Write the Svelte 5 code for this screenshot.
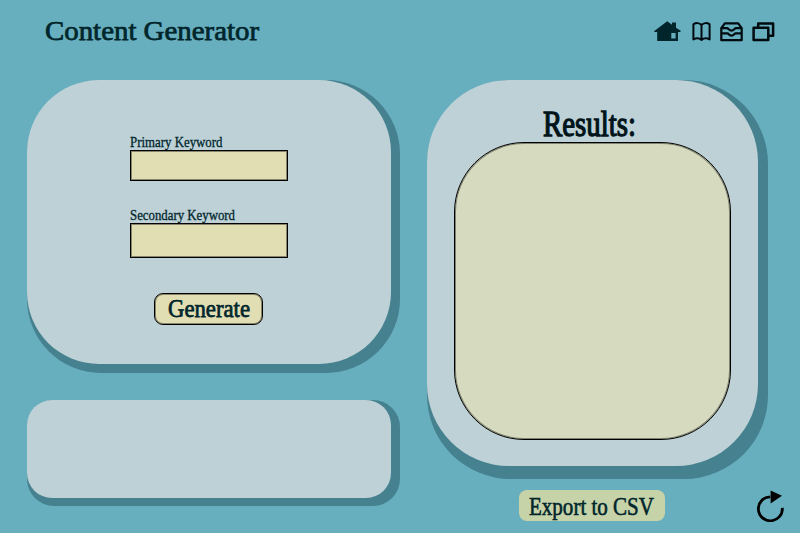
<script>
  let primary = $state('');
  let secondary = $state('');
</script>

{#snippet lettering(text, width, height, baseline, size, stroke)}
  <svg class="lettering" {width} {height} overflow="visible">
    <text x="0" y={baseline} font-size={size} stroke-width={stroke} textLength={width} lengthAdjust="spacingAndGlyphs">{text}</text>
  </svg>
{/snippet}

<div class="app">
  <header>
    <div class="title">{@render lettering('Content Generator', 214, 30, 23, 28, 0.75)}</div>
    <nav>
      <svg width="27" height="21" viewBox="0 0 27 21" fill="#00262c">
        <path fill-rule="evenodd" d="M0 10.2 L13.2 0.2 L18 3.8 V1.4 H22 V6.8 L27 10 L26 11 H24 V20 H3.2 V11 H0.6 Z M17.3 12 V17.5 H21.6 V12 Z" />
      </svg>
      <svg width="19" height="20" viewBox="0 0 19 20" fill="none" stroke="#000b10" stroke-width="2" stroke-linejoin="round">
        <path d="M9.5 3 C7.5 .6 3.8 .6 1.4 2.4 V17.4 C4 16 7.4 16 9.5 18 C11.6 16 15 16 17.6 17.4 V2.4 C15.2 .6 11.5 .6 9.5 3 V18" />
      </svg>
      <svg width="23" height="20" viewBox="0 0 23 20" fill="none" stroke="#000b10" stroke-width="2.2" stroke-linejoin="round">
        <path d="M1.3 6.2 L4.8 1.4 H18.2 L21.7 6.2 V18.2 H1.3 Z M1.3 6.2 H7 C8.6 6.2 9 8.6 11.5 8.6 C14 8.6 14.4 6.2 16 6.2 H21.7 M1.3 11.4 H7.4 C8.8 11.4 8.8 13.7 11.5 13.7 C14.2 13.7 14.2 11.4 15.6 11.4 H21.7" />
      </svg>
      <svg width="23" height="20" viewBox="0 0 23 20" fill="none" stroke="#000b10" stroke-width="2.5" stroke-linejoin="round">
        <path d="M1.6 5.8 H16.3 V18 H1.6 Z M6.2 5.5 V1.6 H21.1 V13.8 H17" />
      </svg>
    </nav>
  </header>

  <main>
    <div class="column">
      <div class="shade form-shade">
        <section class="card form-card">
          <label>
            {@render lettering('Primary Keyword', 92.5, 14, 11, 15, 0.3)}
            <input class="first" bind:value={primary} />
          </label>
          <label class="second-label">
            {@render lettering('Secondary Keyword', 105, 14, 11, 15, 0.3)}
            <input class="second" bind:value={secondary} />
          </label>
          <button class="generate">{@render lettering('Generate', 82, 28, 21.5, 25, 0.75)}</button>
        </section>
      </div>
      <div class="shade note-shade"><section class="card note-card"></section></div>
    </div>

    <div class="column right">
      <div class="shade results-shade">
        <section class="card results-card">
          <h2>{@render lettering('Results:', 93, 36, 29.7, 35.5, 1.3)}</h2>
          <div class="output"></div>
        </section>
      </div>
      <footer>
        <button class="export">{@render lettering('Export to CSV', 125, 30, 23.5, 25.5, 0.6)}</button>
        <button class="reload" aria-label="Reload">
          <svg width="27" height="32" viewBox="0 0 27 32">
            <path d="M25.3 17.8 A12 12 0 1 1 13.3 6.8" fill="none" stroke="#000" stroke-width="2.8" />
            <path d="M13.6 0.5 L25 5.7 L13.6 13.5 Z" />
          </svg>
        </button>
      </footer>
    </div>
  </main>
</div>

<style>
  :global(body) { background: #67aebe; }
  .app {
    width: 800px;
    height: 533px;
    overflow: hidden;
    background: #67aebe;
    font-family: "Palatino Linotype", Palatino, "Liberation Serif", serif;
  }
  svg { display: block; flex: none; }
  .lettering text { fill: #00262c; stroke: #00262c; }
  header {
    box-sizing: border-box;
    height: 80px;
    padding: 17px 25px 0 45px;
    display: flex;
    justify-content: space-between;
  }
  nav { display: flex; padding-top: 4px; }
  nav svg:nth-child(2) { margin: 1px 0 0 11px; }
  nav svg:nth-child(3) { margin: 1px 0 0 9px; }
  nav svg:nth-child(4) { margin: 1px 0 0 9px; }
  main { display: flex; gap: 27px; padding-left: 27px; }
  .shade { background: #45818e; }
  .card { box-sizing: border-box; background: #bdd1d7; }
  .form-shade { width: 373px; height: 293px; border-radius: 74px; }
  .form-card {
    width: 364px;
    height: 284px;
    border-radius: 72px;
    padding: 56px 0 0 103px;
    display: flex;
    flex-direction: column;
    align-items: flex-start;
  }
  label { display: block; }
  .second-label { margin-top: 28px; }
  input, button {
    display: block;
    box-sizing: border-box;
    margin: 0;
    border: 0;
    font: inherit;
  }
  input {
    width: 158px;
    padding: 0 8px;
    border: 1px solid #000;
    outline: 0;
    border-radius: 0;
    background: #e2deb3;
  }
  input, .generate, .output { box-shadow: inset 0 0 0 1px rgba(0, 0, 0, 0.4); }
  .first { height: 31px; }
  .second { height: 35px; }
  .generate {
    width: 109px;
    height: 32px;
    margin: 35px 0 0 24px;
    padding: 0 0 0 13px;
    border: 1px solid #000;
    border-radius: 9px;
    background: #e2deb3;
  }
  .note-shade { width: 373px; height: 106px; margin-top: 27px; border-radius: 27px; }
  .note-card { width: 364px; height: 98px; border-radius: 25px; }
  .results-shade { width: 341px; height: 399px; border-radius: 84px; }
  .results-card {
    width: 331px;
    height: 386px;
    border-radius: 82px;
    padding: 26px 0 0 27px;
  }
  h2 { margin: 0 0 0 89px; font-weight: 400; }
  h2 .lettering text { fill: #00141a; stroke: #00141a; }
  .output {
    box-sizing: border-box;
    width: 277px;
    height: 298px;
    border: 1px solid #000;
    border-radius: 70px;
    background: #d6dabe;
  }
  footer { display: flex; padding-left: 92px; }
  .export {
    width: 146px;
    height: 31px;
    margin-top: 11px;
    padding: 0 0 0 10px;
    border-radius: 8px;
    background: #c6d3a9;
  }
  .reload { margin: 11px 0 0 92px; padding: 0; background: none; }
</style>
